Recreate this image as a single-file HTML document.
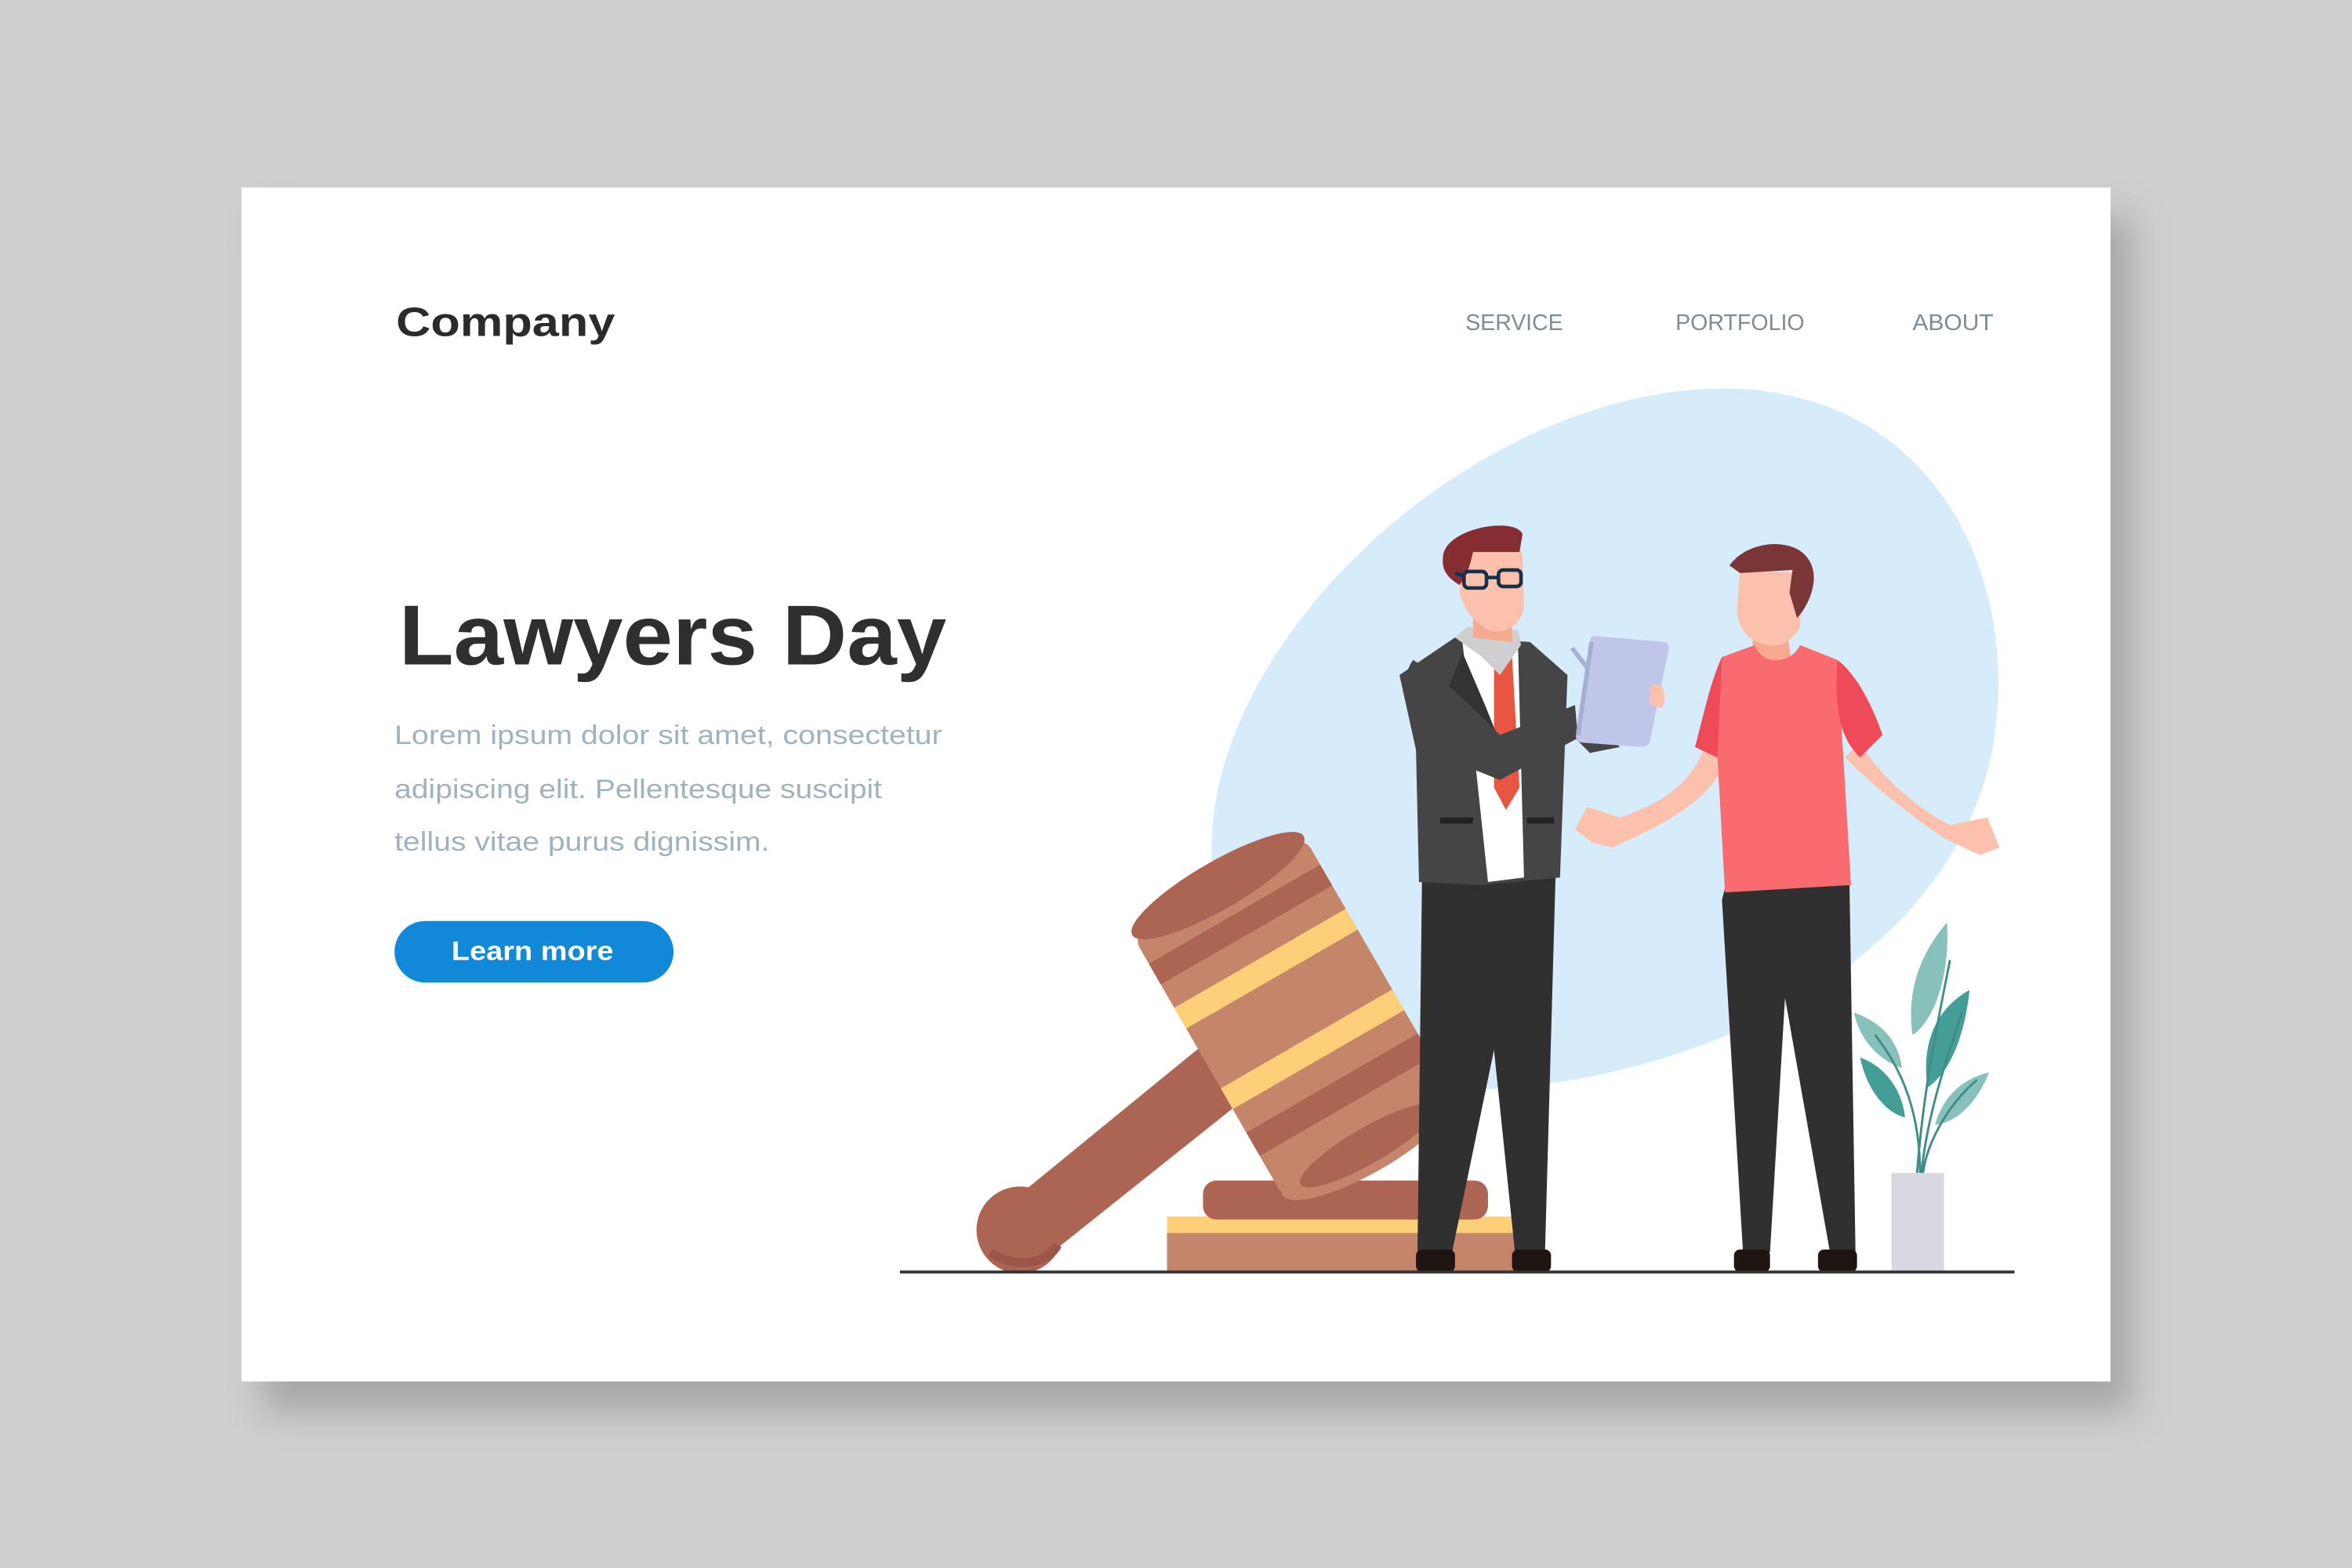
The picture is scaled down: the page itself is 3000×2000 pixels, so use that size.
<!DOCTYPE html>
<html><head><meta charset="utf-8"><style>
html,body{margin:0;padding:0;width:3000px;height:2000px;overflow:hidden;background:#cfcfcf}
svg{display:block}
</style></head><body>
<svg width="3000" height="2000" viewBox="0 0 1568 1045.33" preserveAspectRatio="none" xmlns="http://www.w3.org/2000/svg" font-family="Liberation Sans, sans-serif">
<defs>
<filter id="sh" x="-10%" y="-10%" width="125%" height="130%"><feGaussianBlur stdDeviation="12"/></filter>
</defs>
<rect width="1568" height="1046" fill="#cfcfcf"/>
<rect x="175" y="145" width="1246" height="796" fill="#8a8a8a" opacity="0.6" filter="url(#sh)"/>
<rect x="161" y="125" width="1246" height="796" fill="#fff"/>

<text x="264" y="224" font-size="27" font-weight="bold" fill="#2b2b2b" textLength="146" lengthAdjust="spacingAndGlyphs">Company</text>
<g font-size="15" fill="#7d8c97">
<text x="977" y="220" textLength="65" lengthAdjust="spacingAndGlyphs">SERVICE</text>
<text x="1117" y="220" textLength="86" lengthAdjust="spacingAndGlyphs">PORTFOLIO</text>
<text x="1275" y="220" textLength="54" lengthAdjust="spacingAndGlyphs">ABOUT</text>
</g>
<text x="266" y="443" font-size="57" font-weight="bold" fill="#2f2f2f" textLength="365" lengthAdjust="spacingAndGlyphs">Lawyers Day</text>
<g font-size="18" fill="#9fb3bf">
<text x="263" y="496" textLength="365" lengthAdjust="spacingAndGlyphs">Lorem ipsum dolor sit amet, consectetur</text>
<text x="263" y="532" textLength="325" lengthAdjust="spacingAndGlyphs">adipiscing elit. Pellentesque suscipit</text>
<text x="263" y="567" textLength="250" lengthAdjust="spacingAndGlyphs">tellus vitae purus dignissim.</text>
</g>
<rect x="263" y="614" width="186" height="41" rx="20.5" fill="#1188d8"/>
<text x="301" y="640" font-size="18" font-weight="bold" fill="#fff" textLength="108" lengthAdjust="spacingAndGlyphs">Learn more</text>

<!-- blob -->
<path d="M808,575 C800,430 980,262 1145,259 C1280,257 1342,370 1331,480 C1318,625 1150,728 960,727 C860,726 812,665 808,575 Z" fill="#d7ecfb"/>

<!-- gavel base -->
<rect x="778" y="820" width="232" height="28" fill="#c4856a"/>
<rect x="778" y="811" width="232" height="11" fill="#fccf78"/>
<rect x="802" y="787" width="190" height="26" rx="9" fill="#ad6553"/>
<!-- handle -->
<path d="M668,806 L810,690 L838,726 L700,836 Z" fill="#ad6553"/>
<circle cx="680" cy="820" r="29" fill="#ad6553"/>
<path d="M660,835 C680,848 700,840 705,830" stroke="#9a5747" stroke-width="6" fill="none"/>
<!-- head -->
<g transform="translate(862,677) rotate(-30)">
<rect x="-66" y="-100" width="132" height="205" rx="10" fill="#c4856a"/>
<rect x="-66" y="-78" width="132" height="16" fill="#ad6553"/>
<rect x="-66" y="-44" width="132" height="16" fill="#fccf78"/>
<rect x="-66" y="18" width="132" height="16" fill="#fccf78"/>
<rect x="-66" y="52" width="132" height="18" fill="#ad6553"/>
<ellipse cx="0" cy="100" rx="66" ry="18" fill="#c4856a"/>
<ellipse cx="0" cy="100" rx="52" ry="12" fill="#ad6553"/>
<ellipse cx="0" cy="-100" rx="66" ry="16" fill="#ad6553"/>
</g>

<!-- lawyer -->
<path d="M948,585 L1037,585 L1030,835 L1010,835 L996,700 L968,835 L945,835 Z" fill="#303030"/>
<rect x="944" y="833" width="26" height="15" rx="4" fill="#1e1412"/>
<rect x="1008" y="833" width="26" height="15" rx="4" fill="#1e1412"/>
<path d="M970,425 L1020,428 L1045,450 L1040,585 L988,590 L946,588 L944,500 L933,450 Z" fill="#454545"/>
<path d="M975,428 L1012,430 L1016,585 L992,588 Z" fill="#fff"/>
<path d="M996,437 L1008,437 L1013,525 L1004,540 L996,525 Z" fill="#e85540"/>
<path d="M970,425 L988,438 L1000,450 L1014,430 L1012,420 L978,418 Z" fill="#cfcfcf"/>
<path d="M975,435 L990,470 L998,490 L985,495 L965,460 Z" fill="#333"/>
<rect x="960" y="545" width="22" height="4" fill="#222"/>
<rect x="1018" y="545" width="18" height="4" fill="#222"/>
<!-- neck + face -->
<path d="M982,405 L1008,405 L1008,428 L982,425 Z" fill="#f6a98f"/>
<path d="M975,368 C978,357 1012,356 1015,370 L1016,405 C1014,418 1002,423 992,420 C982,414 975,405 973,395 Z" fill="#fcc1ad"/>
<path d="M962,372 C962,352 1010,344 1015,356 L1013,368 L982,368 C980,378 977,385 973,390 C965,385 961,380 962,372 Z" fill="#852d30"/>
<g fill="none" stroke="#15324a" stroke-width="2.4">
<rect x="976" y="381" width="15" height="11" rx="3"/>
<rect x="999" y="380" width="15" height="11" rx="3"/>
<path d="M991,385 L999,385 M976,384 L970,382"/>
</g>
<!-- arm to tablet -->
<path d="M942,440 C928,460 945,490 975,510 L1000,520 L1052,492 L1050,470 L1000,490 C980,470 960,450 942,440 Z" fill="#454545"/>
<path d="M1048,490 L1060,502 L1080,498 L1060,480 Z" fill="#454545"/>
<path d="M1048,432 L1058,445" stroke="#a9b0d6" stroke-width="3"/>
<path d="M1063,424 L1110,428 C1113,429 1113,432 1112,435 L1100,494 C1099,497 1097,498 1094,498 L1054,495 C1051,494 1050,492 1051,489 L1060,428 C1060,425 1061,424 1063,424 Z" fill="#bfc6ea"/>
<path d="M1061,428 L1052,490" stroke="#a6aed6" stroke-width="3"/>
<path d="M1100,458 C1108,452 1112,462 1108,472 L1100,470 Z" fill="#fcc1ad"/>

<!-- man 2 -->
<path d="M1150,592 L1233,590 L1237,835 L1220,835 L1190,665 L1180,835 L1162,835 L1148,600 Z" fill="#303030"/>
<rect x="1156" y="833" width="24" height="15" rx="4" fill="#1e1412"/>
<rect x="1212" y="833" width="26" height="15" rx="4" fill="#1e1412"/>
<!-- arms -->
<path d="M1137,495 C1130,520 1110,535 1080,545 L1058,538 L1050,553 L1062,562 L1075,565 L1090,558 C1118,545 1140,530 1150,510 Z" fill="#fcc1ad"/>
<path d="M1240,495 C1255,520 1280,540 1300,550 L1325,545 L1333,565 L1320,570 L1298,560 C1275,545 1250,525 1230,505 Z" fill="#fcc1ad"/>
<path d="M1168,425 L1192,425 L1194,440 L1170,440 Z" fill="#f6a98f"/>
<path d="M1148,438 L1170,430 C1175,445 1195,442 1200,430 L1225,440 L1234,590 L1150,595 L1145,505 L1130,498 C1135,480 1140,455 1148,438 Z" fill="#f96b6e"/>
<path d="M1148,438 C1140,455 1135,480 1130,498 L1145,505 Z" fill="#ef4a58"/>
<path d="M1225,440 C1238,450 1248,470 1255,490 L1240,505 C1230,495 1222,480 1225,440 Z" fill="#ef4a58"/>
<path d="M1160,380 L1202,382 L1200,418 C1195,428 1185,432 1178,430 C1165,428 1158,418 1158,405 Z" fill="#fcc1ad"/>
<path d="M1153,377 C1165,360 1195,358 1205,372 C1215,385 1205,405 1198,412 L1193,395 L1195,380 L1160,382 Z" fill="#7a3536"/>

<!-- plant -->
<g>
<path d="M1298,615 C1285,630 1270,655 1275,690 C1290,680 1300,650 1298,615 Z" fill="#88c0bb"/>
<path d="M1313,660 C1295,670 1280,690 1285,725 C1300,715 1310,690 1313,660 Z" fill="#449d96"/>
<path d="M1236,675 C1250,680 1265,690 1268,712 C1255,708 1240,695 1236,675 Z" fill="#88c0bb"/>
<path d="M1240,705 C1255,710 1268,725 1270,745 C1258,742 1245,728 1240,705 Z" fill="#449d96"/>
<path d="M1326,715 C1312,718 1296,728 1290,750 C1305,748 1318,735 1326,715 Z" fill="#88c0bb"/>
<path d="M1278,782 C1282,730 1290,690 1300,640 M1280,782 C1280,745 1270,715 1250,690 M1282,782 C1285,760 1300,735 1318,720 M1281,782 C1285,740 1300,700 1308,675" stroke="#3e8d86" stroke-width="1.5" fill="none"/>
<rect x="1261" y="782" width="35" height="66" fill="#d8d8e3"/>
</g>

<rect x="600" y="847" width="743" height="2" fill="#333"/>
</svg>
</body></html>
